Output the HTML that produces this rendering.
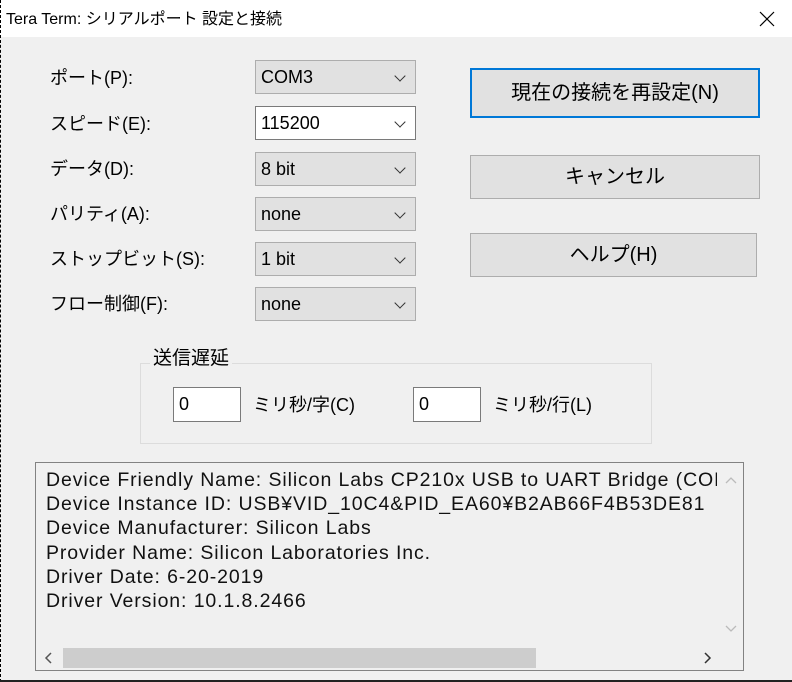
<!DOCTYPE html>
<html><head><meta charset="utf-8"><style>
*{margin:0;padding:0;box-sizing:border-box}
body{width:792px;height:682px;background:#f0f0f0;position:relative;overflow:hidden;font-family:"Liberation Sans","Noto Sans CJK JP",sans-serif;color:#000}
.a{position:absolute}
.t{font-size:18px;white-space:nowrap;line-height:22px}
.cb{position:absolute;left:255px;width:161px;height:34px;background:#e1e1e1;border:1px solid #adadad;font-size:18px;padding:6px 0 0 5px}
.cb.w{background:#fff;border-color:#7a7a7a}
.cb:after{content:"";position:absolute;right:11px;top:11px;width:7px;height:7px;border-right:1.3px solid #333;border-bottom:1.3px solid #333;transform:rotate(45deg)}
.btn{position:absolute;background:#e1e1e1;border:1px solid #adadad;font-size:20px;text-align:center}
.ed{position:absolute;background:#fff;border:1px solid #7a7a7a;height:35px;width:68px;font-size:18px;padding:6px 0 0 5px}
</style></head><body>
<div class="a" style="left:0;top:0;width:792px;height:37px;background:#fff"></div>
<div class="a t" style="left:6px;top:9px;font-size:16px">Tera Term: シリアルポート 設定と接続</div>
<svg class="a" style="left:759px;top:11px" width="16" height="16"><path d="M1 1L15 15M15 1L1 15" stroke="#000" stroke-width="1.2"/></svg>
<div class="a" style="left:0;top:0;width:1px;height:682px;border-left:1px dashed #000"></div>
<div class="a" style="left:0;top:680px;width:792px;height:2px;background:#222"></div>

<div class="a t" style="left:50px;top:67px">ポート(P):</div>
<div class="a t" style="left:50px;top:113px">スピード(E):</div>
<div class="a t" style="left:50px;top:158px">データ(D):</div>
<div class="a t" style="left:50px;top:203px">パリティ(A):</div>
<div class="a t" style="left:50px;top:248px">ストップビット(S):</div>
<div class="a t" style="left:50px;top:293px">フロー制御(F):</div>

<div class="cb" style="top:60px">COM3</div>
<div class="cb w" style="top:106px">115200</div>
<div class="cb" style="top:152px">8 bit</div>
<div class="cb" style="top:197px">none</div>
<div class="cb" style="top:242px">1 bit</div>
<div class="cb" style="top:287px">none</div>

<div class="btn" style="left:470px;top:68px;width:290px;height:50px;border:2px solid #0078d7;line-height:46px">現在の接続を再設定(N)</div>
<div class="btn" style="left:470px;top:155px;width:290px;height:44px;line-height:42px">キャンセル</div>
<div class="btn" style="left:470px;top:233px;width:287px;height:44px;line-height:42px">ヘルプ(H)</div>

<div class="a" style="left:140px;top:363px;width:512px;height:81px;border:1px solid #dcdcdc"></div>
<div class="a t" style="left:150px;top:348px;background:#f0f0f0;padding:0 3px;font-size:19px">送信遅延</div>
<div class="ed" style="left:173px;top:387px">0</div>
<div class="a t" style="left:253px;top:394px">ミリ秒/字(C)</div>
<div class="ed" style="left:413px;top:387px">0</div>
<div class="a t" style="left:493px;top:394px">ミリ秒/行(L)</div>

<div class="a" style="left:35px;top:462px;width:709px;height:209px;border:1px solid #828282;background:#f0f0f0;overflow:hidden">
<div class="a" style="left:10px;top:5px;width:672px;overflow:hidden;font-size:19.5px;letter-spacing:0.9px;line-height:24.2px;white-space:pre;color:#111">Device Friendly Name: Silicon Labs CP210x USB to UART Bridge (COM3)
Device Instance ID: USB¥VID_10C4&amp;PID_EA60¥B2AB66F4B53DE81
Device Manufacturer: Silicon Labs
Provider Name: Silicon Laboratories Inc.
Driver Date: 6-20-2019
Driver Version: 10.1.8.2466</div>
<div class="a" style="left:681px;top:0;width:26px;height:182px;background:#f0f0f0"></div>
<svg class="a" style="left:689px;top:13px" width="12" height="8"><path d="M1 7L6 2L11 7" fill="none" stroke="#bbb" stroke-width="1.3"/></svg>
<svg class="a" style="left:689px;top:162px" width="12" height="8"><path d="M1 1L6 6L11 1" fill="none" stroke="#bbb" stroke-width="1.3"/></svg>
<div class="a" style="left:0;top:182px;width:707px;height:25px;background:#f0f0f0"></div>
<div class="a" style="left:27px;top:185px;width:473px;height:20px;background:#cdcdcd"></div>
<svg class="a" style="left:8px;top:189px" width="8" height="12"><path d="M7 1L2 6L7 11" fill="none" stroke="#555" stroke-width="1.5"/></svg>
<svg class="a" style="left:668px;top:189px" width="8" height="12"><path d="M1 1L6 6L1 11" fill="none" stroke="#333" stroke-width="1.5"/></svg>
</div>
</body></html>
